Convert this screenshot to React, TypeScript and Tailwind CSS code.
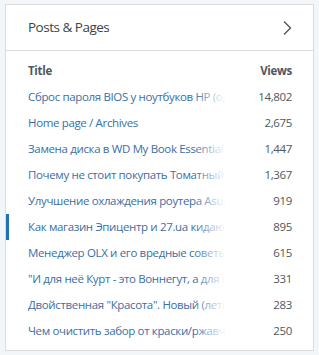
import React from 'react';

const rows = [
  { title: 'Сброс пароля BIOS у ноутбуков HP (одна из моделей)', views: '14,802' },
  { title: 'Home page / Archives', views: '2,675' },
  { title: 'Замена диска в WD My Book Essential', views: '1,447' },
  { title: 'Почему не стоит покупать Томатный пирог', views: '1,367' },
  { title: 'Улучшение охлаждения роутера Asus', views: '919' },
  { title: 'Как магазин Эпицентр и 27.ua кидают', views: '895', active: true },
  { title: 'Менеджер OLX и его вредные советы', views: '615' },
  { title: '"И для неё Курт - это Воннегут, а для меня', views: '331' },
  { title: 'Двойственная "Красота". Новый (летний)', views: '283' },
  { title: 'Чем очистить забор от краски/ржавчины', views: '250' },
];

export default function App() {
  return (
    <main
      className="min-h-screen bg-[#f3f6f8] pt-[4px] pl-[5px] pr-[5px]"
      style={{ fontFamily: '"Open Sans", "Noto Sans", sans-serif' }}
    >
      <div className="bg-white border border-[#dcdcde] w-[309px]">
        {/* Header */}
        <div className="h-[46px] flex items-center justify-between pl-[22px] pr-[20px] border-b border-[#dcdcde]">
          <h2 className="text-[13.5px] text-[#3c434a] tracking-[-0.5px]">Posts &amp; Pages</h2>
          <svg width="12" height="16" viewBox="0 0 12 16" fill="none">
            <path d="M3 1.5 L9.5 8 L3 14.5" stroke="#50575e" strokeWidth="1.4" />
          </svg>
        </div>

        {/* Table */}
        <div className="pt-[7px] pb-[6px]">
          <div className="h-[26px] flex items-center justify-between pl-[22px] pr-[21px] text-[11.5px] font-bold text-[#50575e] tracking-[-0.3px]">
            <span>Title</span>
            <span>Views</span>
          </div>
          {rows.map((r) => (
            <div key={r.title} className="relative h-[26px] flex items-center pl-[22px] pr-[21px] text-[11.5px] tracking-[-0.35px]">
              {r.active && <div className="absolute left-0 top-0 bottom-0 w-[3px] bg-[#2271b1]" />}
              <div className="relative w-[198px] overflow-hidden whitespace-nowrap text-[#3a6ea6]">
                {r.title}
                <div className="absolute right-0 top-0 bottom-0 w-[32px] bg-gradient-to-r from-white/0 to-white" />
              </div>
              <span className="ml-auto text-[#50575e]">{r.views}</span>
            </div>
          ))}
        </div>
      </div>
    </main>
  );
}
